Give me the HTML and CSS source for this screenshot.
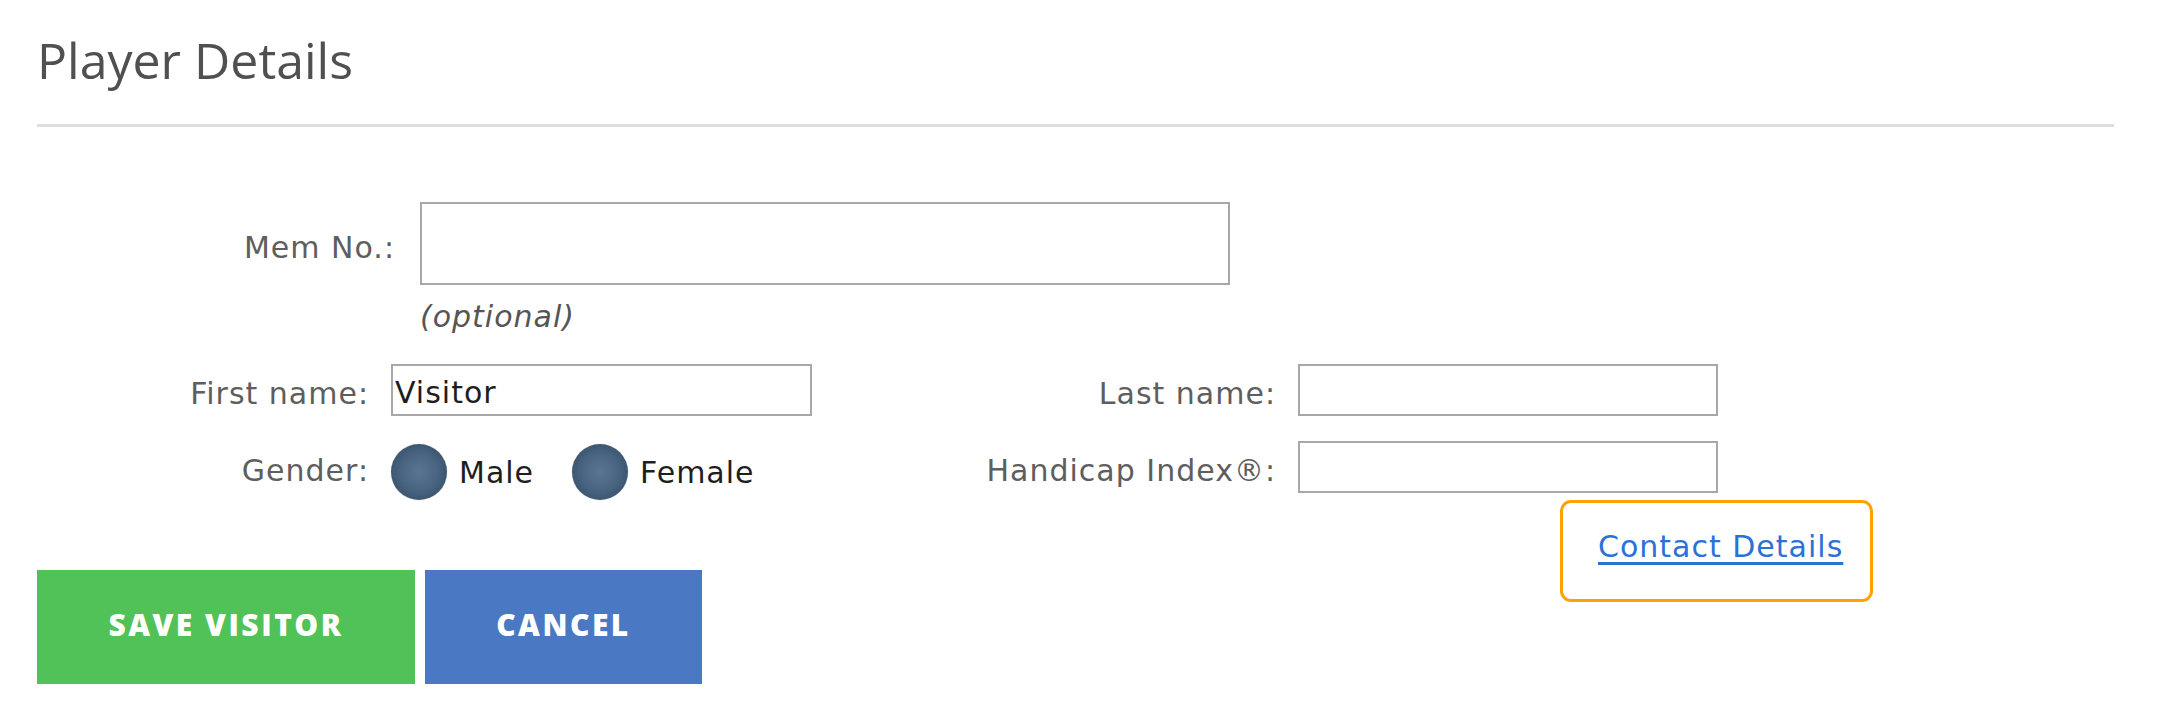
FILE: index.html
```html
<!DOCTYPE html>
<html lang="en">
<head>
<meta charset="utf-8">
<title>Player Details</title>
<link rel="stylesheet" href="styles.css">
</head>
<body>
<div class="page">
  <h1 class="title">Player Details</h1>
  <div class="rule"></div>
  <form class="form">
    <div class="mem-row">
      <label class="label mem-label" for="mem">Mem No.:</label>
      <div class="mem-field">
        <input class="input mem-input" id="mem" type="text">
        <div class="hint">(optional)</div>
      </div>
    </div>
    <div class="grid">
      <label class="label" for="first">First name:</label>
      <input class="input" id="first" type="text" value="Visitor">
      <label class="label" for="last">Last name:</label>
      <input class="input" id="last" type="text">
      <span class="label">Gender:</span>
      <div class="radios">
        <span class="radio"><span class="dot"></span><span class="radio-text">Male</span></span>
        <span class="radio"><span class="dot"></span><span class="radio-text">Female</span></span>
      </div>
      <label class="label" for="hcp">Handicap Index®:</label>
      <input class="input" id="hcp" type="text">
    </div>
    <div class="contact-row">
      <a class="contact" href="#">Contact Details</a>
    </div>
    <div class="actions">
      <button class="btn btn-save" type="button">SAVE VISITOR</button>
      <button class="btn btn-cancel" type="button">CANCEL</button>
    </div>
  </form>
</div>
</body>
</html>
```
FILE: styles.css
```css
html, body {
  margin: 0;
  padding: 0;
  background: #ffffff;
}

.page {
  padding: 27px 45px 0 37px;
  font-family: "DejaVu Sans", Verdana, sans-serif;
  font-size: 30px;
  letter-spacing: 1px;
  color: #5a5a5a;
}

.title {
  margin: 0;
  font-family: "Open Sans", "DejaVu Sans", sans-serif;
  font-weight: 400;
  font-size: 50px;
  line-height: 67px;
  letter-spacing: 0;
  color: #505050;
}

.rule {
  margin-top: 30px;
  height: 3px;
  background: #dedede;
}

.form {
  margin: 0;
}

.mem-row {
  display: flex;
  align-items: flex-start;
  gap: 25px;
  margin-top: 75px;
}

.mem-label {
  box-sizing: border-box;
  width: 358px;
  height: 83px;
  display: flex;
  align-items: center;
  justify-content: flex-end;
}

.label {
  box-sizing: border-box;
  padding-top: 8px;
  text-align: right;
  color: #5e5e5e;
  font-size: 30px;
  line-height: 36px;
  white-space: nowrap;
}

.input {
  box-sizing: border-box;
  height: 52px;
  margin: 0;
  padding: 5px 0 0 2px;
  border: 2px solid #a8a8a8;
  border-radius: 0;
  background: #ffffff;
  font-family: "DejaVu Sans", Verdana, sans-serif;
  font-size: 30px;
  letter-spacing: 1px;
  color: #1e1e1e;
  outline: none;
}

.mem-input {
  width: 810px;
  height: 83px;
}

.hint {
  margin-top: 13px;
  font-style: italic;
  font-size: 30px;
  line-height: 38px;
  color: #555555;
}

.grid {
  display: grid;
  grid-template-columns: 332px 421px 442px 420px;
  grid-auto-rows: 52px;
  column-gap: 22px;
  row-gap: 25px;
  align-items: center;
  margin-top: 28px;
}

.grid .input {
  width: 100%;
}

.radios {
  display: flex;
  align-items: center;
  gap: 38px;
  margin-top: 10px;
}

.radio {
  display: flex;
  align-items: center;
  gap: 12px;
}

.dot {
  width: 56px;
  height: 56px;
  border-radius: 50%;
  background: radial-gradient(circle at 50% 50%, #5a7592 0%, #4a6582 45%, #2e4660 100%);
  box-shadow: 0 0 1px rgba(0, 0, 0, 0.4);
}

.radio-text {
  padding-top: 2px;
  color: #1e1e1e;
  font-size: 30px;
  line-height: 36px;
}

.contact-row {
  display: flex;
  margin-top: 7px;
  padding-left: 1523px;
}

.contact {
  box-sizing: border-box;
  width: 313px;
  height: 102px;
  margin-bottom: -32px;
  padding: 26px 0 0 35px;
  border: 3px solid #ffa200;
  border-radius: 11px;
  color: #2a72d6;
  font-size: 30px;
  line-height: 36px;
  text-decoration: underline;
  text-decoration-thickness: 3px;
  text-underline-offset: 5px;
  white-space: nowrap;
}

.actions {
  display: flex;
  gap: 10px;
}

.btn {
  box-sizing: border-box;
  height: 114px;
  margin: 0;
  padding: 0 0 6px 0;
  border: none;
  border-radius: 0;
  color: #ffffff;
  font-family: "Open Sans", "DejaVu Sans", sans-serif;
  font-weight: 800;
  font-size: 30px;
  letter-spacing: 2.5px;
  cursor: pointer;
}

.btn-save {
  width: 378px;
  background: #50c258;
}

.btn-cancel {
  width: 277px;
  background: #4a78c2;
}
```
